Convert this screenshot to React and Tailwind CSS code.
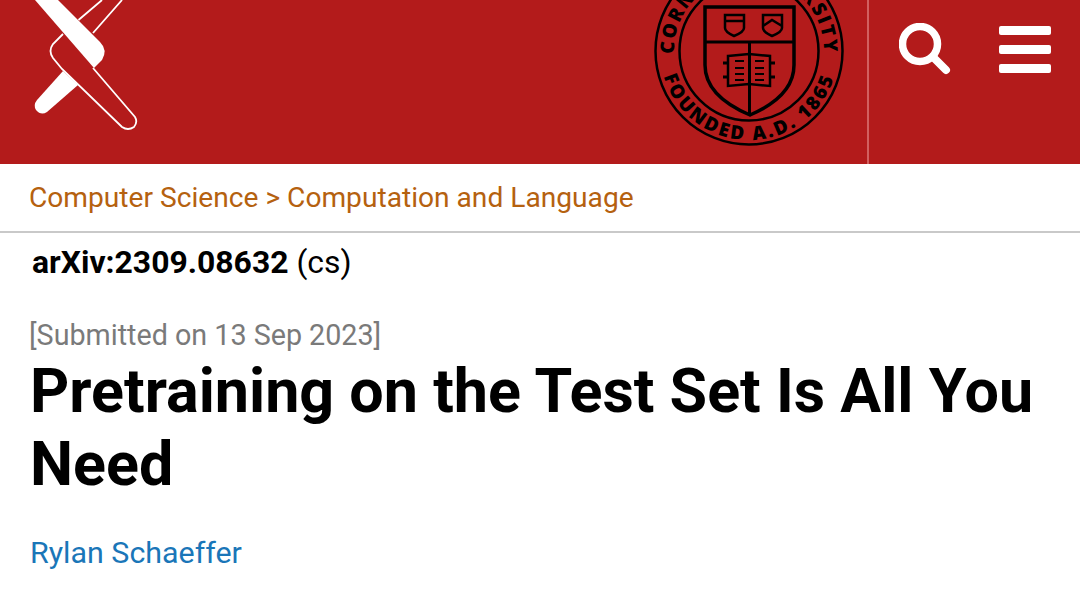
const ROBOTO = { fontFamily: 'Roboto, sans-serif' };

function ArxivLogo() {
  return (
    <svg width="150" height="164" viewBox="0 0 150 164" className="shrink-0">
      {/* lower filled arm */}
      <path d="M63 71 L37 100 Q33 105 36 110 Q41 116 47 112 L78 85 Z" fill="#fff" />
      {/* upper filled arm */}
      <path d="M35 0 L58 0 L100 42 Q108 50 102 60 L94 68 L35 0 Z" fill="#fff" />
      {/* outlined arm */}
      <path
        d="M102 0 L78.500 20 M122 0 L93 33 M63 34 L53 44 Q48 51 53 58 L62 69 L122 127 Q128 131 134 127 Q138 122 135 117 L93 68"
        fill="none"
        stroke="#fff"
        strokeWidth="1.800"
      />
    </svg>
  );
}

function CornellSeal() {
  return (
    <svg width="192" height="164" viewBox="0 0 192 164" className="shrink-0 mr-[22px]">
      <defs>
        <path id="seal-top" d="M 96 126 A 75 75 0 1 1 96 -24 A 75 75 0 1 1 96 126" />
        <path id="seal-bottom" d="M 96 -38 A 89 89 0 1 0 96 140 A 89 89 0 1 0 96 -38" />
      </defs>
      <g fill="none" stroke="#000">
        <circle cx="96" cy="51" r="93.500" strokeWidth="2.500" />
        <circle cx="96" cy="51" r="69.500" strokeWidth="2.500" />
        {/* shield */}
        <path d="M52 7 H141 V65 Q141 96 97 115 Q52 96 52 65 Z" strokeWidth="3.500" />
        <path d="M52 42 H141" strokeWidth="3" />
        <path d="M96.500 42 V115" strokeWidth="3" />
        {/* small shields */}
        <path d="M72 15 H91 V28 Q91 32 81 36 Q72 32 72 28 Z M72 21 H91" strokeWidth="2.500" />
        <path d="M110 15 H129 V28 Q129 32 119 36 Q110 32 110 28 Z M110 26 L119 20 L129 26" strokeWidth="2.500" />
        {/* book */}
        <path d="M75 56 L96 54 L117 56 V86 L96 84 L75 86 Z" strokeWidth="2.500" />
        <path d="M70 63 H75 M70 77 H75 M117 63 H122 M117 77 H122" strokeWidth="3" />
        <path d="M82 61 H91 M82 68 H91 M82 74 H91 M82 80 H91 M102 61 H111 M102 68 H111 M102 74 H111 M102 80 H111" strokeWidth="2" />
      </g>
      <text fontFamily="'Open Sans', sans-serif" fontWeight="800" fontSize="19" letterSpacing="1.800" fill="#000">
        <textPath href="#seal-top" startOffset="50%" textAnchor="middle">CORNELL UNIVERSITY</textPath>
      </text>
      <text fontFamily="'Open Sans', sans-serif" fontWeight="800" fontSize="19" letterSpacing="2.400" fill="#000">
        <textPath href="#seal-bottom" startOffset="50%" textAnchor="middle">FOUNDED A.D. 1865</textPath>
      </text>
    </svg>
  );
}

function SearchIcon() {
  return (
    <svg width="54" height="54" viewBox="0 0 54 54">
      <circle cx="21" cy="21" r="17.500" fill="none" stroke="#fff" strokeWidth="7.500" />
      <path d="M34 34 L47 47" stroke="#fff" strokeWidth="8" strokeLinecap="round" />
    </svg>
  );
}

export default function App() {
  return (
    <div className="w-[1080px] h-[608px] overflow-hidden bg-white" style={ROBOTO}>
      {/* Header */}
      <header className="h-[164px] bg-[#b31b1b] flex overflow-hidden">
        <ArxivLogo />
        <div className="flex-1" />
        <CornellSeal />
        <div className="w-[213px] border-l-2 border-[#d2605f] flex items-start pt-[23px] pl-[30px] gap-[46px]">
          <SearchIcon />
          <div className="flex flex-col gap-[10px] pt-[3px]">
            <div className="w-[52px] h-[9px] rounded-[2px] bg-white" />
            <div className="w-[52px] h-[9px] rounded-[2px] bg-white" />
            <div className="w-[52px] h-[9px] rounded-[2px] bg-white" />
          </div>
        </div>
      </header>

      {/* Breadcrumb */}
      <div className="h-[69px] pl-[29px] flex items-center border-b-2 border-[#c9c9c9] text-[28.150px] text-[#b5610f]">
        <span className="translate-y-[1px]">Computer Science &gt; Computation and Language</span>
      </div>

      {/* Paper */}
      <main className="px-[30px]">
        <div className="text-[31.900px] leading-[36px] mt-[11px] ml-[2px] text-black">
          <span className="font-bold">arXiv:2309.08632</span> (cs)
        </div>
        <div className="text-[28.700px] leading-[32px] mt-[39px] ml-[-1px] text-[#7a7a7a]">
          [Submitted on 13 Sep 2023]
        </div>
        <h1 className="text-[61px] leading-[73px] font-bold text-black mt-[4px]">
          Pretraining on the Test Set Is All You Need
        </h1>
        <div className="text-[30.400px] leading-[36px] mt-[34px] text-[#1a76b8]">Rylan Schaeffer</div>
      </main>
    </div>
  );
}
